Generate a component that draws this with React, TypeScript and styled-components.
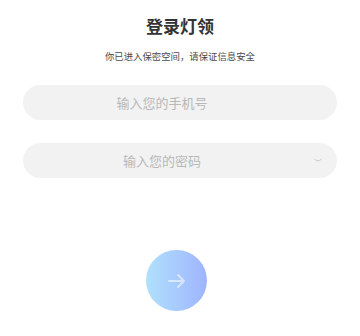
import React from 'react'
import styled, { createGlobalStyle } from 'styled-components'

const GlobalStyle = createGlobalStyle`
  html, body {
    margin: 0;
    padding: 0;
    background: #ffffff;
  }
  body {
    font-family: 'Noto Sans CJK SC', 'Noto Sans', sans-serif;
  }
`

const Page = styled.div`
  width: 360px;
  height: 336px;
  display: flex;
  flex-direction: column;
  align-items: center;
  padding-top: 14px;
  box-sizing: border-box;
`

const Title = styled.h1`
  margin: 0;
  font-size: 17px;
  line-height: 24px;
  font-weight: 700;
  color: #333333;
`

const Subtitle = styled.p`
  margin: 11px 0 0;
  font-size: 9.4px;
  line-height: 14px;
  color: #4a4a4a;
`

const Form = styled.div`
  width: 314px;
  margin-top: 22px;
  display: flex;
  flex-direction: column;
  gap: 23px;
`

const Field = styled.div`
  position: relative;
  height: 35px;
  border-radius: 18px;
  background: #f2f2f2;
  display: flex;
  align-items: center;
  justify-content: center;
  padding: 0 56px 0 20px;
`

const Input = styled.input`
  width: 100%;
  border: none;
  outline: none;
  background: transparent;
  text-align: center;
  font-family: inherit;
  font-size: 13px;
  color: #333333;

  &::placeholder {
    color: #b8b8b8;
  }
`

const Chevron = styled.svg`
  position: absolute;
  right: 15px;
  top: 50%;
  margin-top: -3px;
`

const Submit = styled.button`
  margin-top: 72px;
  margin-right: 7px;
  width: 61px;
  height: 61px;
  border: none;
  border-radius: 50%;
  background: linear-gradient(90deg, #b0e1fc 0%, #9fb4fe 100%);
  display: flex;
  align-items: center;
  justify-content: center;
  padding: 0;
  cursor: pointer;
`

export default function App() {
  return (
    <>
      <GlobalStyle />
      <Page>
        <Title>登录灯领</Title>
        <Subtitle>你已进入保密空间，请保证信息安全</Subtitle>
        <Form>
          <Field>
            <Input placeholder="输入您的手机号" />
          </Field>
          <Field>
            <Input type="password" placeholder="输入您的密码" />
            <Chevron width="8" height="5" viewBox="0 0 8 5">
              <path d="M0.5 1 Q4 4.5 7.5 1" fill="none" stroke="#c8c8c8" strokeWidth="1" />
            </Chevron>
          </Field>
        </Form>
        <Submit>
          <svg width="18" height="16" viewBox="0 0 18 16">
            <path
              d="M1 8 H16 M10 2 L16 8 L10 14"
              fill="none"
              stroke="rgba(255,255,255,0.55)"
              strokeWidth="2"
              strokeLinecap="round"
              strokeLinejoin="round"
            />
          </svg>
        </Submit>
      </Page>
    </>
  )
}
